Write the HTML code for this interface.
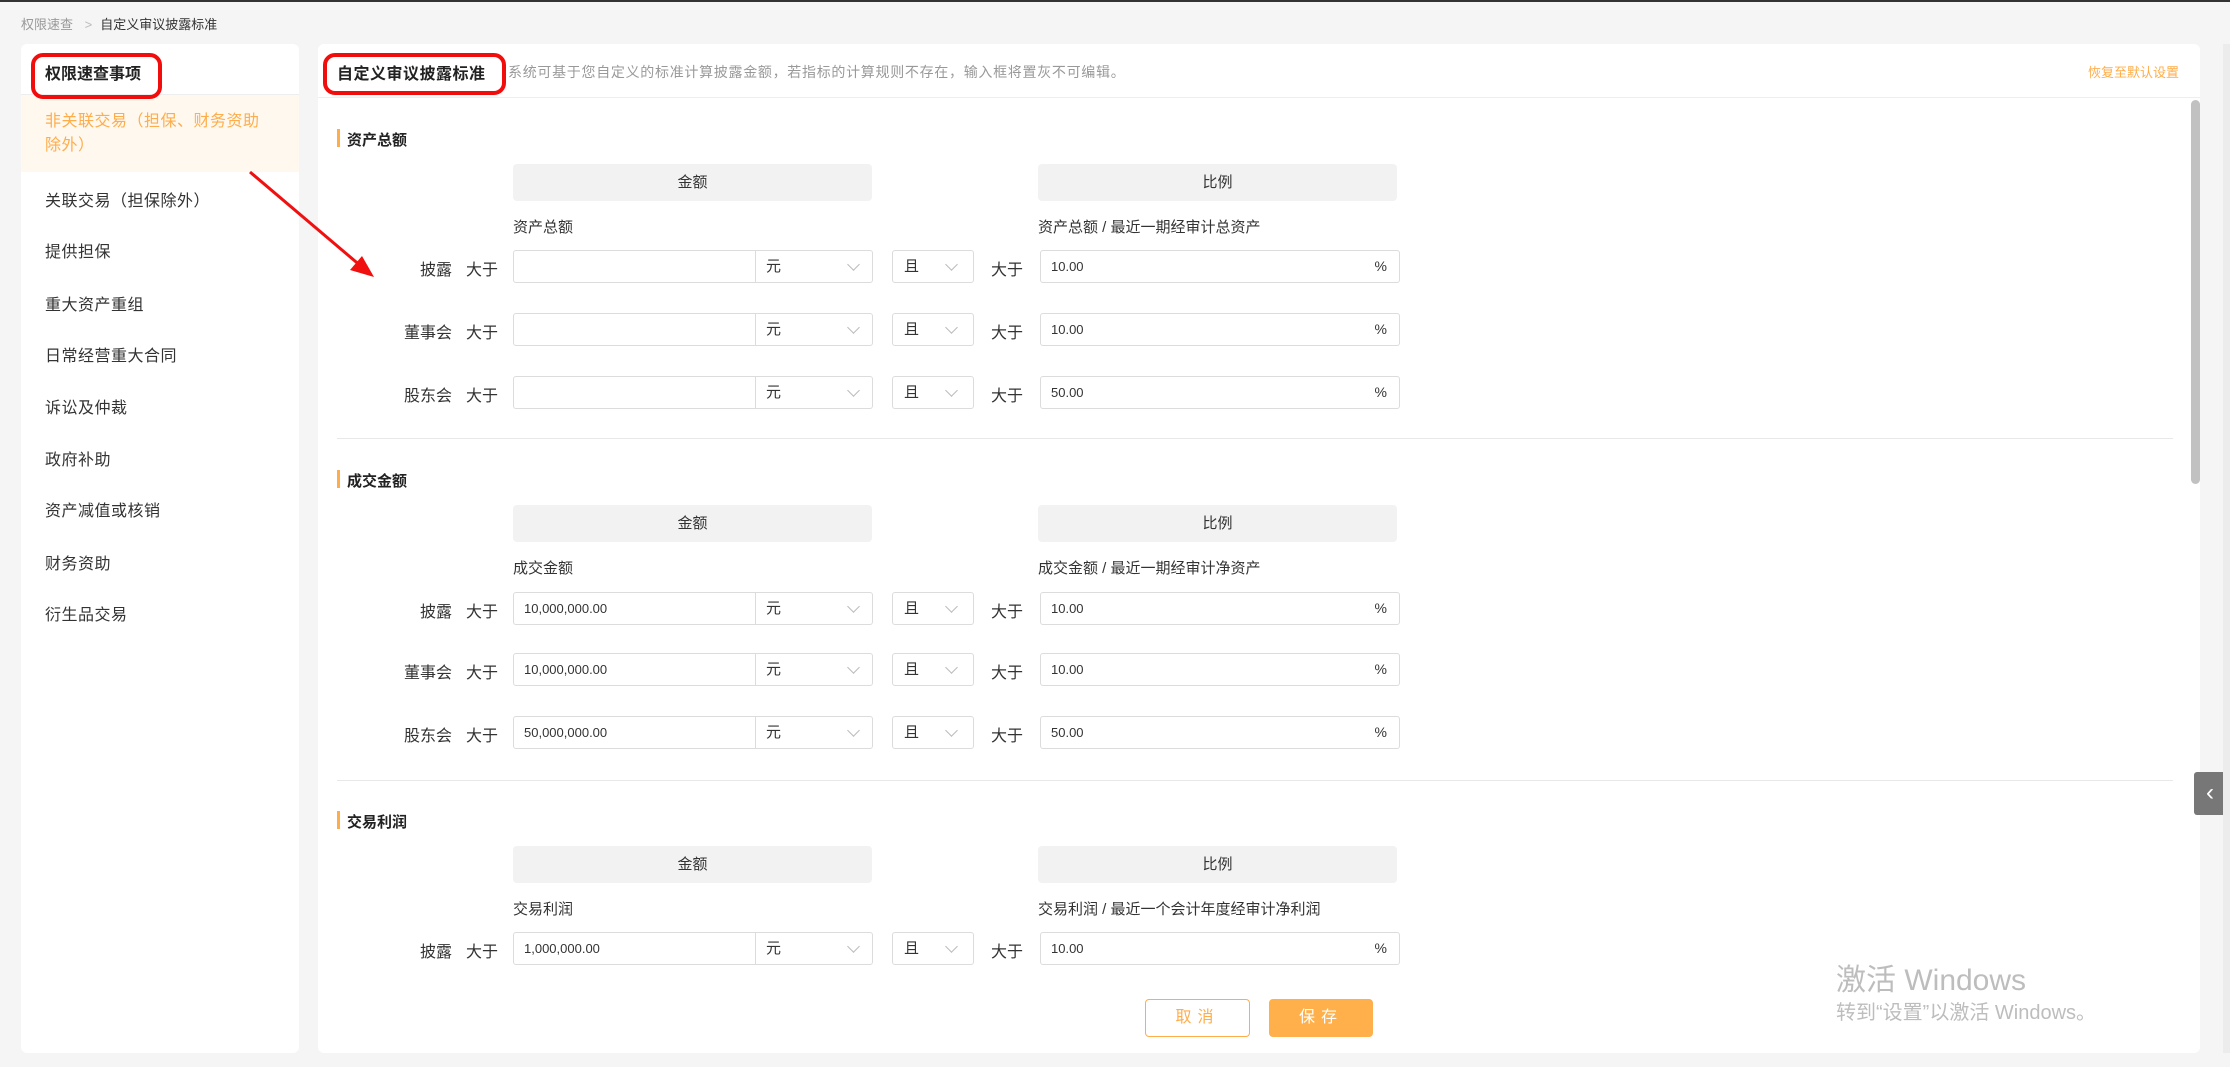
<!DOCTYPE html>
<html><head><meta charset="utf-8"><style>
*{margin:0;padding:0;box-sizing:border-box}
body{width:2230px;height:1067px;background:#f5f5f5;font-family:"Liberation Sans","Noto Sans CJK SC",sans-serif;color:#333;position:relative;overflow:hidden}
.a{position:absolute;white-space:nowrap}
.panel{position:absolute;background:#fff;border-radius:6px}
.red{position:absolute;border:4px solid #f20d0d;border-radius:12px}
.menu{font-size:16px;color:#333;left:45px;letter-spacing:0.5px}
.hdr{position:absolute;background:#f2f2f2;border-radius:4px;height:37px;width:359px;font-size:15px;text-align:center;line-height:37px;color:#333}
.inp{position:absolute;border:1px solid #dcdcdc;border-radius:3px;height:33px;background:#fff;font-size:13px;line-height:31px}
.chev{position:absolute;top:9px;width:9px;height:9px;border-right:1px solid #bbb;border-bottom:1px solid #bbb;transform:rotate(45deg)}
.lbl{font-size:15px}
.rl{font-size:16px}
</style></head><body>
<div class="a" style="left:0;top:0;width:2230px;height:2px;background:#333"></div>
<div class="a" style="left:21px;top:14px;font-size:13px;color:#999">权限速查 <span style="margin:0 8px;color:#bbb">&gt;</span><span style="color:#333">自定义审议披露标准</span></div>

<div class="panel" style="left:21px;top:44px;width:278px;height:1009px">
</div>
<div class="a" style="left:21px;top:94px;width:278px;height:1px;background:#eee"></div>
<div class="a" style="left:21px;top:95px;width:278px;height:77px;background:#fff8ef"></div>
<div class="a" style="left:45px;top:60px;font-size:16px;font-weight:bold;color:#222">权限速查事项</div>
<div class="red" style="left:31px;top:53px;width:131px;height:46px"></div>
<div class="a menu" style="top:110px;color:#ffad4a;line-height:24px">非关联交易（担保、财务资助<br>除外）</div>
<div class="a menu" style="top:187px">关联交易（担保除外）</div>
<div class="a menu" style="top:238px">提供担保</div>
<div class="a menu" style="top:291px">重大资产重组</div>
<div class="a menu" style="top:342px">日常经营重大合同</div>
<div class="a menu" style="top:394px">诉讼及仲裁</div>
<div class="a menu" style="top:446px">政府补助</div>
<div class="a menu" style="top:497px">资产减值或核销</div>
<div class="a menu" style="top:550px">财务资助</div>
<div class="a menu" style="top:601px">衍生品交易</div>

<div class="panel" style="left:318px;top:44px;width:1882px;height:1009px"></div>
<div class="a" style="left:337px;top:60px;font-size:16px;font-weight:bold;color:#222;letter-spacing:0.5px">自定义审议披露标准</div>
<div class="red" style="left:323px;top:53px;width:183px;height:42px"></div>
<div class="a" style="left:508px;top:62px;font-size:14px;color:#999;letter-spacing:0.7px">系统可基于您自定义的标准计算披露金额，若指标的计算规则不存在，输入框将置灰不可编辑。</div>
<div class="a" style="left:2088px;top:62px;font-size:13px;color:#ffad4a">恢复至默认设置</div>
<div class="a" style="left:318px;top:97px;width:1882px;height:1px;background:#eee"></div>
<div class="a" style="left:2191px;top:100px;width:9px;height:384px;background:#c1c1c1;border-radius:5px"></div>

<div id="secs"></div>
<script>
var S=[
 {t:"资产总额",y:129,l:"资产总额",r:"资产总额 / 最近一期经审计总资产",rows:[["披露","","10.00"],["董事会","","10.00"],["股东会","","50.00"]],rs:[267,330,393],div:438},
 {t:"成交金额",y:470,l:"成交金额",r:"成交金额 / 最近一期经审计净资产",rows:[["披露","10,000,000.00","10.00"],["董事会","10,000,000.00","10.00"],["股东会","50,000,000.00","50.00"]],rs:[609,670,733],div:780},
 {t:"交易利润",y:811,l:"交易利润",r:"交易利润 / 最近一个会计年度经审计净利润",rows:[["披露","1,000,000.00","10.00"]],rs:[949],div:0}
];
var h="";
S.forEach(function(s){
 h+='<div class="a" style="left:337px;top:'+s.y+'px;width:3px;height:18px;background:#ffad4a"></div>';
 h+='<div class="a" style="left:347px;top:'+(s.y)+'px;font-size:15px;font-weight:bold;color:#222">'+s.t+'</div>';
 var hy=s.y+35;
 h+='<div class="hdr" style="left:513px;top:'+hy+'px">金额</div><div class="hdr" style="left:1038px;top:'+hy+'px">比例</div>';
 h+='<div class="a lbl" style="left:513px;top:'+(hy+52)+'px">'+s.l+'</div><div class="a lbl" style="left:1038px;top:'+(hy+52)+'px">'+s.r+'</div>';
 s.rows.forEach(function(r,i){
  var c=s.rs[i],t=c-17;
  h+='<div class="a rl" style="right:'+(2230-452)+'px;top:'+(c-11)+'px">'+r[0]+'</div>';
  h+='<div class="a rl" style="left:466px;top:'+(c-11)+'px">大于</div>';
  h+='<div class="inp" style="left:513px;top:'+t+'px;width:360px"><span style="padding-left:10px">'+r[1]+'</span><div class="a" style="left:241px;top:0;width:1px;height:31px;background:#dcdcdc"></div><span class="a" style="left:252px;top:0;font-size:15px">元</span><div class="chev" style="left:335px"></div></div>';
  h+='<div class="inp" style="left:892px;top:'+t+'px;width:82px"><span class="a" style="left:11px;top:0;font-size:15px">且</span><div class="chev" style="left:54px"></div></div>';
  h+='<div class="a rl" style="left:991px;top:'+(c-11)+'px">大于</div>';
  h+='<div class="inp" style="left:1040px;top:'+t+'px;width:360px"><span style="padding-left:10px">'+r[2]+'</span><span class="a" style="right:12px;top:0;font-size:14px">%</span></div>';
 });
 if(s.div)h+='<div class="a" style="left:337px;top:'+s.div+'px;width:1836px;height:1px;background:#e8e8e8"></div>';
});
document.getElementById("secs").innerHTML=h;
</script>

<div class="a" style="left:1145px;top:999px;width:105px;height:38px;border:1px solid #ffad4a;border-radius:4px;color:#ffad4a;font-size:16px;text-align:center;line-height:36px;letter-spacing:6px">取消</div>
<div class="a" style="left:1269px;top:999px;width:104px;height:38px;background:#ffb04a;border-radius:4px;color:#fff;font-size:16px;text-align:center;line-height:38px;letter-spacing:6px">保存</div>

<div class="a" style="left:1836px;top:955px;font-size:30px;color:#bdbdbd">激活 Windows</div>
<div class="a" style="left:1836px;top:996px;font-size:20px;color:#bdbdbd">转到“设置”以激活 Windows。</div>

<div class="a" style="left:2194px;top:772px;width:32px;height:43px;background:#777;border-radius:3px 0 0 3px;color:#fff;font-size:24px;text-align:center;line-height:42px">&#8249;</div>
<div class="a" style="left:2223px;top:44px;width:7px;height:1009px;background:#ececec"></div>

<svg class="a" style="left:0;top:0" width="2230" height="1067">
<line x1="250" y1="172" x2="362" y2="267" stroke="#f01010" stroke-width="3"/>
<polygon points="374,277 350,270 362,256" fill="#f01010"/>
</svg>
</body></html>
